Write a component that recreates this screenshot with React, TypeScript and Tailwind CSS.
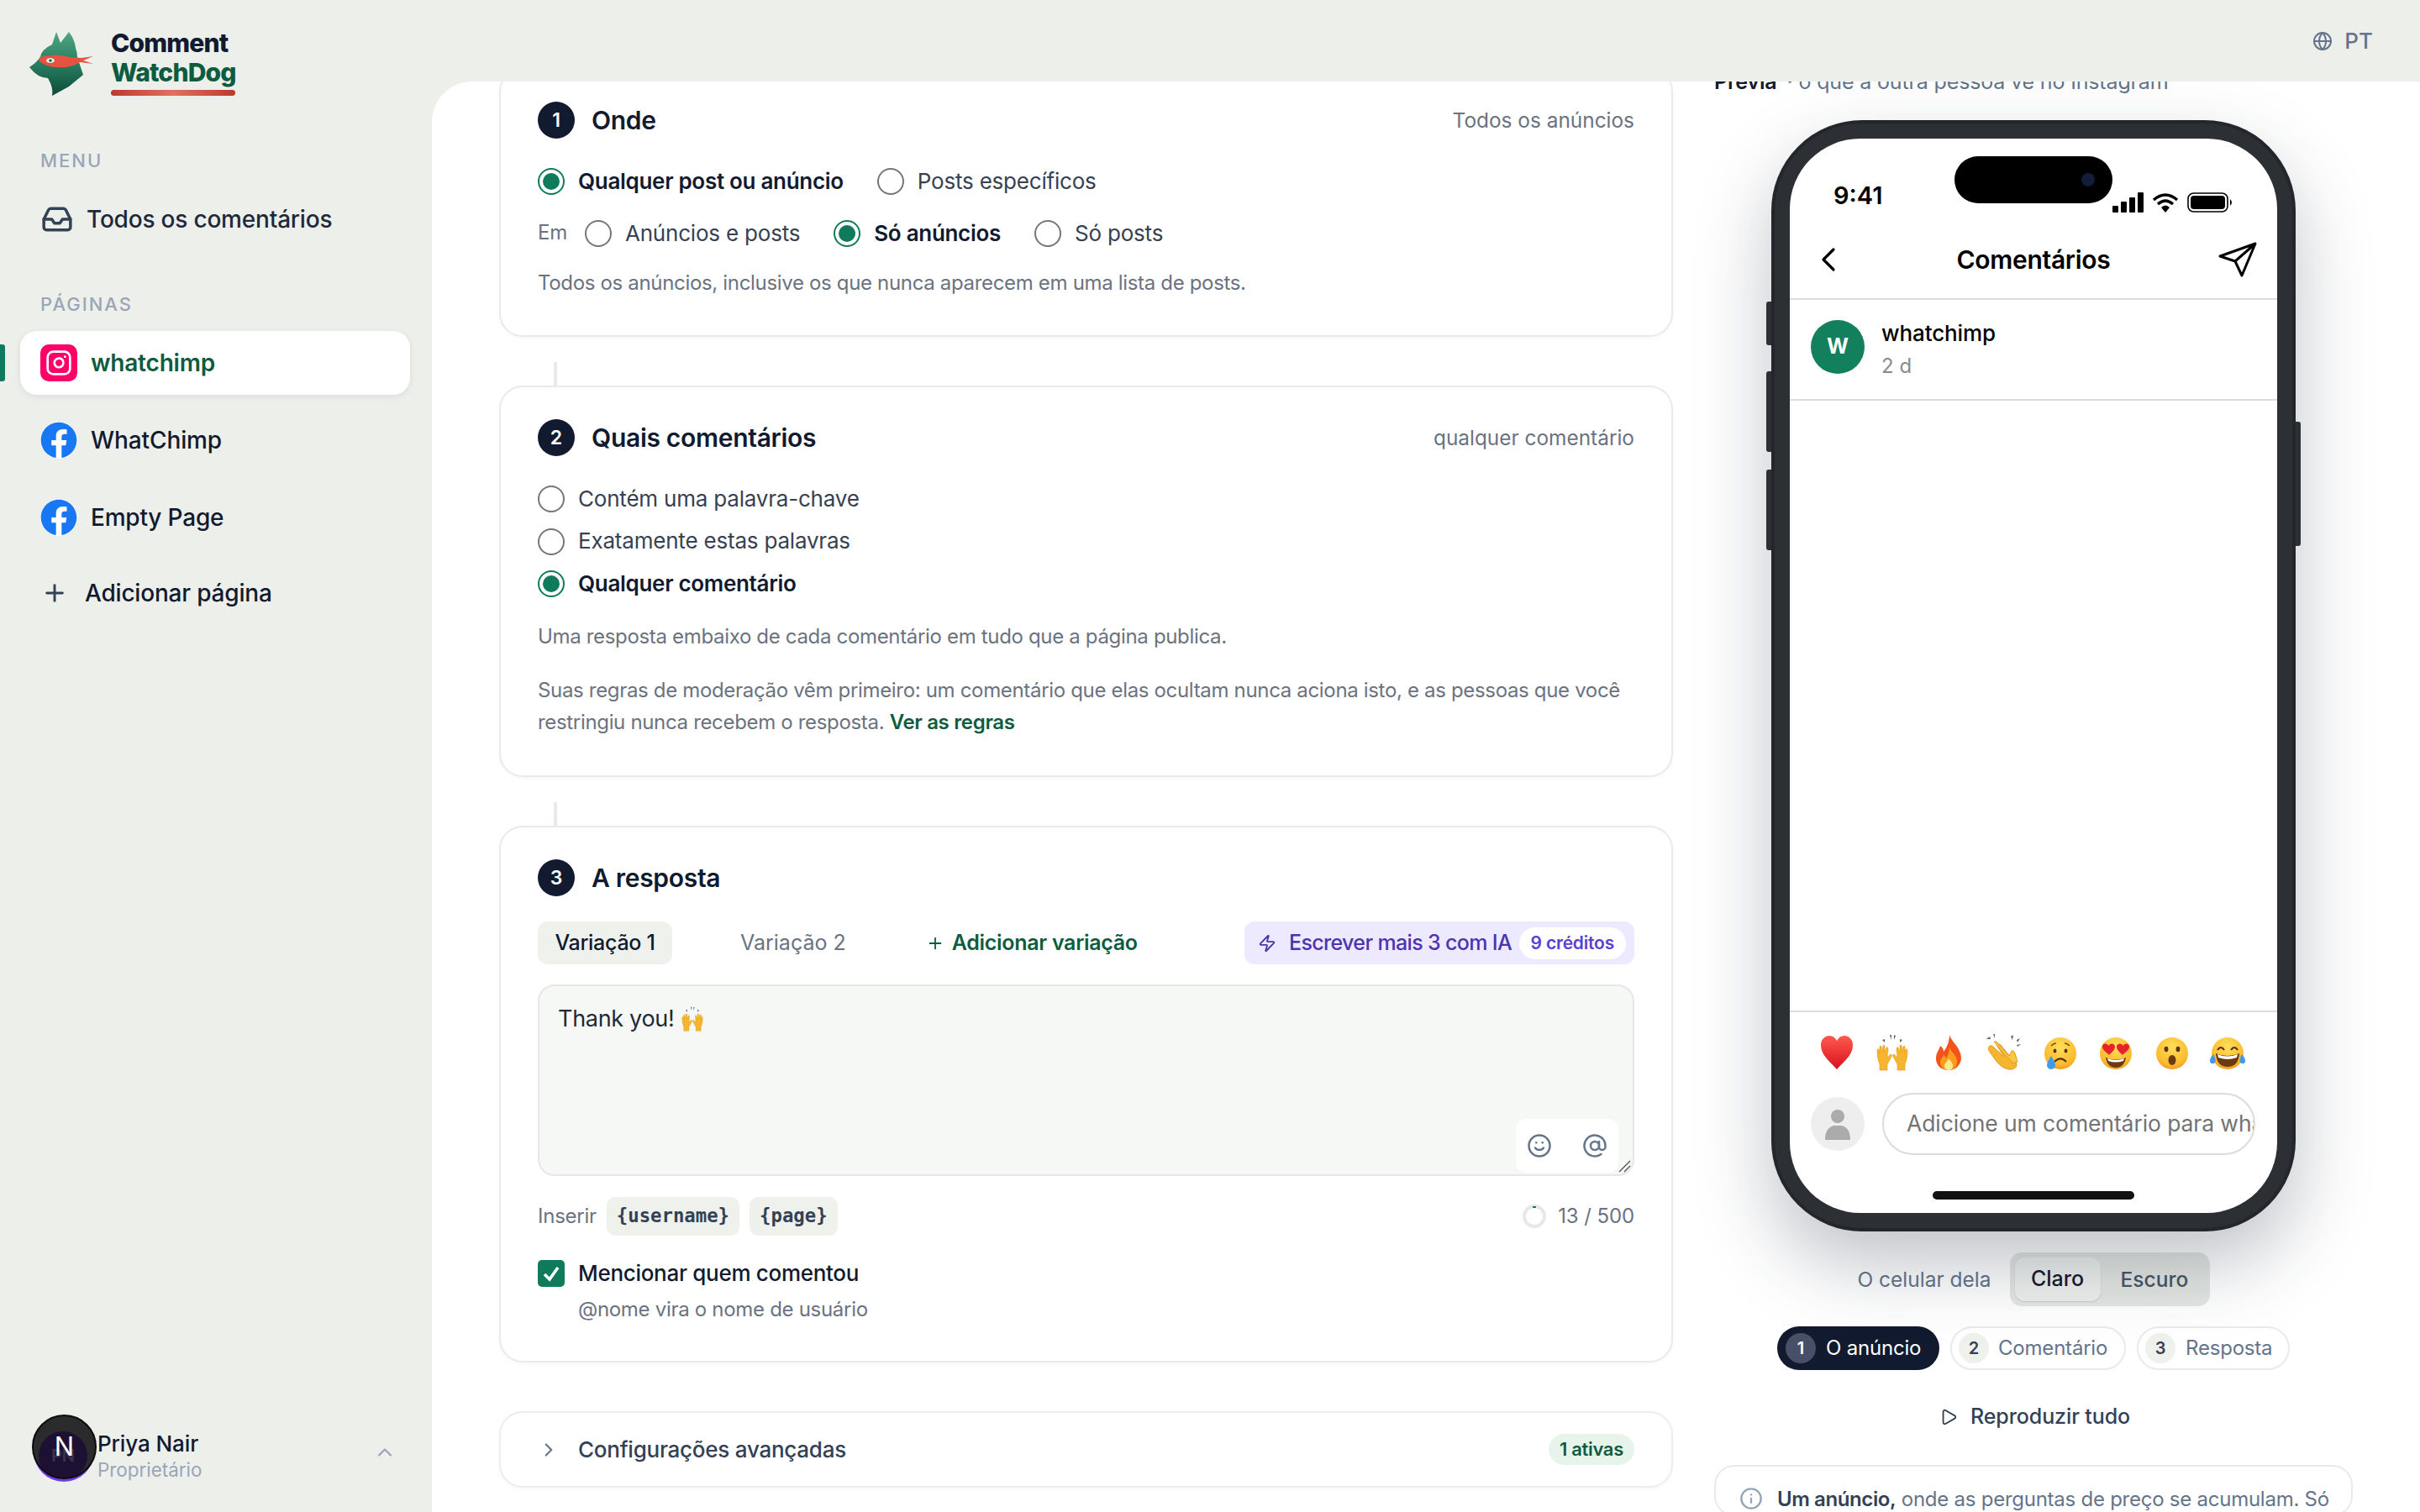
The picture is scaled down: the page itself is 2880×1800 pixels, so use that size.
import {
  AtSign,
  ChevronLeft,
  ChevronRight,
  ChevronUp,
  Globe,
  Inbox,
  Info,
  Instagram,
  Play,
  Plus,
  Smile,
  Zap,
} from "lucide-react";
import { ReactNode } from "react";
import { FaFacebook } from "react-icons/fa";

function Logo() {
  return (
    <svg width="82" height="84" viewBox="34 34 82 84" className="shrink-0">
      <defs>
        <linearGradient id="dog" x1="0" y1="0" x2="0" y2="1">
          <stop offset="0" stopColor="#4fa585" />
          <stop offset="0.55" stopColor="#26795c" />
          <stop offset="1" stopColor="#0d4a39" />
        </linearGradient>
      </defs>
      <path
        d="M36 79 Q44 74 49 67 Q50 58 63 52 L68 37 L73 50 L83 37 Q90 46 91 56 Q93 62 93 67 L100 88 L83 102 L63 113 Q65 104 58 92 Q46 92 36 79 Z"
        fill="url(#dog)"
      />
      <path d="M48 67 Q70 62 84 67 L98 68 L112 66 L100 71 L112 75 L96 73 Q86 80 72 79 Q58 80 48 72 Z" fill="#e5523f" />
      <ellipse cx="61" cy="71" rx="5" ry="3" fill="#d9f0e6" />
      <circle cx="61" cy="71" r="1.6" fill="#0d4a39" />
    </svg>
  );
}

function FacebookIcon() {
  return (
    <span className="flex h-[44px] w-[44px] shrink-0 items-center justify-center rounded-full bg-white">
      <FaFacebook className="h-[44px] w-[44px] text-[#1877f2]" />
    </span>
  );
}

function Radio({ checked = false }: { checked?: boolean }) {
  return checked ? (
    <span className="mt-[2px] flex h-[32px] w-[32px] shrink-0 items-center justify-center rounded-full border-2 border-[#0f7b5c]">
      <span className="h-[20px] w-[20px] rounded-full bg-[#0f7b5c]" />
    </span>
  ) : (
    <span className="mt-[2px] h-[32px] w-[32px] shrink-0 rounded-full border-2 border-[#767676]" />
  );
}

function RadioOption({ label, checked = false }: { label: string; checked?: boolean }) {
  return (
    <div className="flex h-[36px] items-center gap-[16px]">
      <Radio checked={checked} />
      <span className={checked ? "text-[26px] font-semibold tracking-[-0.3px] text-[#111a2e]" : "text-[26px] tracking-[-0.2px] text-[#374151]"}>{label}</span>
    </div>
  );
}

function Card({ children }: { children: ReactNode }) {
  return <section className="rounded-[28px] border-2 border-[#e9ebe8] bg-white px-[44px] pt-[38px] shadow-[0_2px_4px_rgba(0,0,0,0.03)]">{children}</section>;
}

function StepHeader({ n, title, right }: { n: number; title: string; right?: string }) {
  return (
    <div className="flex h-[44px] items-center">
      <span className="flex h-[44px] w-[44px] items-center justify-center rounded-full bg-[#111a2e] text-[23px] font-semibold text-white">{n}</span>
      <span className="ml-[20px] text-[30px] font-semibold tracking-[-0.3px] text-[#111a2e]">{title}</span>
      {right && <span className="ml-auto text-[24.4px] text-[#6b7280]">{right}</span>}
    </div>
  );
}

function Connector() {
  return <div className="ml-[65px] mt-[30px] h-[28px] w-[4px] bg-[#e9ebe8]" />;
}

function FaceGradient() {
  return (
    <radialGradient id="face" cx="0.5" cy="0.3" r="0.8">
      <stop offset="0" stopColor="#ffdf5a" />
      <stop offset="0.7" stopColor="#fbb92c" />
      <stop offset="1" stopColor="#e8871a" />
    </radialGradient>
  );
}

function RaisedHands({ size = 44 }: { size?: number }) {
  return (
    <svg width={size} height={size} viewBox="0 0 44 44">
      <g fill="#f5b52e" stroke="#e79a1f" strokeWidth="0.6">
        <path d="M4 21 Q4 17 6 18 L7 23 L7 15 Q8 13 9 15 L10 22 L11 14 Q12 12 13 14 L13 22 L15 16 Q17 15 17 18 L16 28 L20 24 Q22 24 21 27 L16 36 L16 43 L7 43 L7 36 Q4 30 4 21 Z" />
        <path d="M40 21 Q40 17 38 18 L37 23 L37 15 Q36 13 35 15 L34 22 L33 14 Q32 12 31 14 L31 22 L29 16 Q27 15 27 18 L28 28 L24 24 Q22 24 23 27 L28 36 L28 43 L37 43 L37 36 Q40 30 40 21 Z" />
      </g>
      <g fill="#5f6368">
        <path d="M10 7 L13 6 L13 10 Z" />
        <path d="M19 1 L21 1 L20.5 7 Z" />
        <path d="M24 1 L26 2 L24 7 Z" />
        <path d="M31 6 L34 7 L31 10 Z" />
      </g>
    </svg>
  );
}

function Emoji({ kind }: { kind: string }) {
  if (kind === "hands") return <RaisedHands />;
  if (kind === "heart") {
    return (
      <svg width="44" height="44" viewBox="0 0 44 44">
        <defs>
          <linearGradient id="heart" x1="0" y1="0" x2="0" y2="1">
            <stop offset="0" stopColor="#ff5a4d" />
            <stop offset="1" stopColor="#d9101c" />
          </linearGradient>
        </defs>
        <path d="M22 42 C13 32 3 25 3 13 C3 6 8 2 13 2 C17 2 20 4 22 8 C24 4 27 2 31 2 C36 2 41 6 41 13 C41 25 31 32 22 42 Z" fill="url(#heart)" />
      </svg>
    );
  }
  if (kind === "fire") {
    return (
      <svg width="44" height="44" viewBox="0 0 44 44">
        <path d="M23 1 C25 9 36 15 37 28 C37 37 30 43 22 43 C13 43 7 37 7 29 C7 22 11 19 12 14 C15 16 16 18 16 21 C20 16 23 9 23 1 Z" fill="#f2541b" />
        <path d="M23 16 C25 22 32 25 32 33 C32 39 27 43 22 43 C16 43 12 39 12 34 C12 30 15 28 16 25 C18 26 19 28 19 29 C21 26 23 21 23 16 Z" fill="#fb9d1c" />
        <path d="M22 29 C24 32 27 34 27 38 C27 41 25 43 22 43 C19 43 17 41 17 38 C17 34 21 33 22 29 Z" fill="#ffe98a" />
      </svg>
    );
  }
  if (kind === "clap") {
    return (
      <svg width="44" height="44" viewBox="0 0 44 44">
        <g fill="#f5b52e" stroke="#d98f1c" strokeWidth="0.8">
          <path d="M4 15 Q6 12 9 15 L22 27 L13 13 Q15 10 18 13 L30 28 L33 24 Q36 24 36 27 L37 38 Q34 43 27 42 Q20 41 14 34 L4 20 Q3 17 4 15 Z" />
          <path d="M10 9 Q13 8 15 11 L28 26 L31 20 Q34 19 35 23 L38 33 L33 35 L20 21 Z" fill="#fbc644" />
        </g>
        <g fill="#5f6368">
          <path d="M1 6 L5 3 L6 6 Z" />
          <path d="M9 0 L11 0 L11 5 Z" />
          <path d="M30 3 L33 1 L32 7 Z" />
          <path d="M37 7 L41 5 L38 10 Z" />
          <path d="M37 13 L42 12 L38 15 Z" />
        </g>
      </svg>
    );
  }
  return (
    <svg width="44" height="44" viewBox="0 0 44 44">
      <defs>
        <FaceGradient />
      </defs>
      <circle cx="22" cy="23" r="19" fill="url(#face)" />
      {kind === "sad" && (
        <g>
          <ellipse cx="15.5" cy="20" rx="2" ry="2.6" fill="#5b3410" />
          <ellipse cx="28.5" cy="20" rx="2" ry="2.6" fill="#5b3410" />
          <path d="M11 14 Q14 11 17 11 M33 14 Q30 11 27 11" stroke="#7a4a14" strokeWidth="1.3" fill="none" />
          <path d="M15 33 Q22 26 29 33" stroke="#5b3410" strokeWidth="2.2" fill="none" />
          <path d="M11 26 Q6 34 6 37 A5 5 0 0 0 16 37 Q16 34 11 26 Z" fill="#3d9be9" />
        </g>
      )}
      {kind === "love" && (
        <g>
          <path d="M14 25 C10 21 6 19 6 15 C6 11 11 10 13.5 14 C15 10 21 11 21 15 C21 19 17 22 14 25 Z" fill="#e8212d" />
          <path d="M30 25 C27 22 23 19 23 15 C23 11 29 10 30.5 14 C33 10 38 11 38 15 C38 19 34 21 30 25 Z" fill="#e8212d" />
          <path d="M10 28 Q22 33 34 28 Q32 40 22 40 Q12 40 10 28 Z" fill="#6b3a10" />
          <path d="M12 29 Q22 33 32 29 L31 32 Q22 35 13 32 Z" fill="#fff" />
        </g>
      )}
      {kind === "wow" && (
        <g>
          <ellipse cx="15" cy="18" rx="2.4" ry="3.2" fill="#5b3410" />
          <ellipse cx="29" cy="18" rx="2.4" ry="3.2" fill="#5b3410" />
          <ellipse cx="22" cy="31" rx="4.5" ry="6" fill="#6b3a10" />
        </g>
      )}
      {kind === "laugh" && (
        <g>
          <path d="M10 19 Q14 13 18 19 M26 19 Q30 13 34 19" stroke="#5b3410" strokeWidth="2.2" fill="none" />
          <path d="M8 23 Q22 29 36 23 Q35 39 22 39 Q9 39 8 23 Z" fill="#6b3a10" />
          <path d="M10 24 Q22 29 34 24 L33 28 Q22 32 11 28 Z" fill="#fff" />
          <path d="M5 24 Q0 30 1 33 Q3 37 7 34 Q9 31 5 24 Z M39 24 Q44 30 43 33 Q41 37 37 34 Q35 31 39 24 Z" fill="#3d9be9" />
        </g>
      )}
    </svg>
  );
}

function Phone() {
  const emojis = ["heart", "hands", "fire", "clap", "sad", "love", "wow", "laugh"];
  return (
    <div className="relative h-[1323px] w-[624px] rounded-[108px] border-[4px] border-[#23262b] bg-[#2c2f34] p-[18px] shadow-[0_40px_90px_rgba(30,41,59,0.28)]">
      <span className="absolute -left-[10px] top-[212px] h-[52px] w-[6px] rounded-l-[3px] bg-[#2c2f34]" />
      <span className="absolute -left-[10px] top-[295px] h-[96px] w-[6px] rounded-l-[3px] bg-[#2c2f34]" />
      <span className="absolute -left-[10px] top-[412px] h-[96px] w-[6px] rounded-l-[3px] bg-[#2c2f34]" />
      <span className="absolute -right-[10px] top-[355px] h-[148px] w-[6px] rounded-r-[3px] bg-[#2c2f34]" />
      <div className="relative flex h-full w-full flex-col overflow-hidden rounded-[84px] bg-white font-['Inter',sans-serif] text-black">
        <div className="absolute left-[196px] top-[21px] flex h-[56px] w-[188px] items-center justify-end rounded-full bg-black pr-[21px]">
          <span className="h-[16px] w-[16px] rounded-full bg-[#131c3a]" />
        </div>
        <div className="flex h-[100px] shrink-0 items-end justify-between pb-[12px] pl-[52px] pr-[52px]">
          <span className="mb-[2px] text-[29px] font-semibold leading-[36px]">9:41</span>
          <svg width="144" height="24" viewBox="0 0 144 24">
            <rect x="0" y="16" width="7" height="8" rx="1" />
            <rect x="10" y="11" width="7" height="13" rx="1" />
            <rect x="20" y="6" width="7" height="18" rx="1" />
            <rect x="30" y="0" width="7" height="24" rx="1" />
            <path d="M49 9 Q63 -3 77 9 M54 14 Q63 6 72 14" stroke="#000" strokeWidth="3.4" fill="none" />
            <path d="M58 18 Q63 13 68 18 L63 24 Z" />
            <rect x="90" y="1" width="47" height="22" rx="6.5" fill="none" stroke="#000" strokeWidth="1.6" />
            <rect x="93" y="4" width="41" height="16" rx="4" />
            <path d="M140 8 Q144 12 140 16 Z" />
          </svg>
        </div>
        <div className="relative flex h-[92px] shrink-0 items-center justify-center border-b-2 border-[#dcdcdc] pb-[2px]">
          <ChevronLeft className="absolute left-[22px] h-[48px] w-[48px]" strokeWidth={1.6} />
          <span className="text-[30px] font-semibold tracking-[-0.3px]">Comentários</span>
          <svg width="46" height="42" viewBox="0 0 46 42" className="absolute right-[24px]" fill="none" stroke="#000" strokeWidth="3" strokeLinejoin="round">
            <path d="M2 17 L44 2 L28 40 L20 23 Z M20 23 L44 2" />
          </svg>
        </div>
        <div className="flex h-[120px] shrink-0 border-b-2 border-[#dcdcdc] pl-[25px] pt-[24px]">
          <span className="flex h-[64px] w-[64px] items-center justify-center rounded-full bg-[#12805c] text-[25px] font-bold text-white">W</span>
          <div className="ml-[20px]">
            <div className="-mt-[1px] text-[26px] font-medium leading-[34px] tracking-[-0.1px]">whatchimp</div>
            <div className="mt-[6px] text-[24px] leading-[32px] text-[#8a8a8a]">2 d</div>
          </div>
        </div>
        <div className="flex-1" />
        <div className="shrink-0 border-t-2 border-[#dcdcdc] pl-[34px] pr-[37px] pt-[26px]">
          <div className="flex justify-between">
            {emojis.map((e) => (
              <Emoji key={e} kind={e} />
            ))}
          </div>
        </div>
        <div className="mt-[26px] flex shrink-0 items-center gap-[21px] pl-[25px] pr-[26px]">
          <span className="flex h-[64px] w-[64px] shrink-0 items-center justify-center rounded-full bg-[#eeeeee]">
            <svg width="32" height="38" viewBox="0 0 32 38" fill="#ababab">
              <circle cx="16" cy="10" r="8" />
              <path d="M1 38 Q1 24 11 21 L21 21 Q31 24 31 38 Z" />
            </svg>
          </span>
          <div className="flex h-[74px] min-w-0 flex-1 items-center overflow-hidden rounded-full border-2 border-[#dcdcdc] pl-[27px]">
            <span className="whitespace-nowrap text-[26.5px] tracking-[-0.1px] text-[#737373]">Adicione um comentário para whatchimp</span>
          </div>
        </div>
        <div className="mx-auto mb-[16px] mt-[43px] h-[10px] w-[240px] shrink-0 rounded-full bg-[#111111]" />
      </div>
    </div>
  );
}

export default function App() {
  return (
    <div className="flex h-screen w-full overflow-hidden bg-[#edefeb] font-['Inter',sans-serif] text-[#111a2e]">
      <aside className="relative flex w-[514px] shrink-0 flex-col">
        <div className="flex h-[97px] items-start pl-[33px] pt-[35px]">
          <Logo />
          <div className="ml-[17px] -mt-[1px] flex flex-col">
            <span className="text-[30px] font-extrabold leading-[35px] tracking-[-0.8px]">Comment</span>
            <span className="text-[30px] font-extrabold leading-[35px] tracking-[-0.8px] text-[#0e5c40]">WatchDog</span>
            <span className="mt-[3px] h-[7px] w-[148px] rounded-full bg-gradient-to-r from-[#b93a2b] via-[#e2705f] to-[#b93a2b]" />
          </div>
        </div>

        <div className="mt-[80px] pl-[48px] text-[22px] font-medium leading-[28px] tracking-[2px] text-[#9aa5b8]">MENU</div>
        <div className="mt-[34px] flex h-[44px] items-center pl-[49px]">
          <Inbox className="h-[38px] w-[38px] text-[#334155]" strokeWidth={2.2} />
          <span className="ml-[16px] text-[28px] font-medium tracking-[-0.2px] text-[#1e293b]">Todos os comentários</span>
        </div>

        <div className="mt-[65px] pl-[48px] text-[22px] font-medium leading-[28px] tracking-[2px] text-[#9aa5b8]">PÁGINAS</div>

        <div className="relative mx-[24px] mt-[18px] flex h-[76px] w-[464px] items-center rounded-[20px] bg-white pl-[24px] shadow-[0_2px_8px_rgba(15,23,42,0.08)]">
          <span className="absolute -left-[24px] top-[16px] h-[44px] w-[6px] rounded-r-[3px] bg-[#0f7b5c]" />
          <span className="flex h-[44px] w-[44px] items-center justify-center rounded-[10px] bg-[#ff0069]">
            <Instagram className="h-[32px] w-[32px] text-white" strokeWidth={2} />
          </span>
          <span className="ml-[16px] text-[28px] font-semibold tracking-[-0.2px] text-[#0e5c40]">whatchimp</span>
        </div>

        <div className="mt-[31px] flex h-[46px] items-center pl-[48px]">
          <FacebookIcon />
          <span className="ml-[16px] text-[28px] font-medium tracking-[-0.1px] text-[#111a2e]">WhatChimp</span>
        </div>
        <div className="mt-[46px] flex h-[46px] items-center pl-[48px]">
          <FacebookIcon />
          <span className="ml-[16px] text-[28px] font-medium tracking-[-0.2px] text-[#111a2e]">Empty Page</span>
        </div>
        <div className="mt-[44px] flex h-[46px] items-center pl-[49px]">
          <Plus className="h-[32px] w-[32px] text-[#334155]" strokeWidth={2.2} />
          <span className="ml-[20px] text-[28px] font-medium tracking-[-0.2px] text-[#111a2e]">Adicionar página</span>
        </div>

        <div className="absolute bottom-[35px] left-[38px] flex w-[434px] items-center">
          <div className="relative h-[77px] w-[77px] shrink-0">
            <span className="absolute left-[2px] top-[4px] h-[76px] w-[72px] rounded-full bg-[#6a3de8]" />
            <span className="absolute inset-0 overflow-hidden rounded-full border-2 border-[#0c0c0c] bg-[#2b2b2b]">
              <span className="absolute left-[6px] top-[18px] flex h-[58px] w-[58px] items-center justify-center rounded-full bg-[#1d1033] text-[20px] font-bold text-[#3a3048]">PN</span>
            </span>
            <span className="absolute inset-0 flex items-center justify-center text-[31px] font-normal text-white">N</span>
          </div>
          <div className="ml-[1px] mt-[24px] flex flex-col">
            <span className="text-[26px] font-medium leading-[32px] tracking-[-0.1px] text-[#111a2e]">Priya Nair</span>
            <span className="text-[22.4px] leading-[30px] text-[#9aa5b8]">Proprietário</span>
          </div>
          <ChevronUp className="ml-auto mt-[14px] h-[28px] w-[28px] text-[#9aa5b8]" />
        </div>
      </aside>

      <div className="flex min-w-0 flex-1 flex-col">
        <div className="flex h-[97px] shrink-0 items-center justify-end pr-[56px]">
          <Globe className="h-[24px] w-[24px] text-[#64748b]" />
          <span className="ml-[14px] text-[26px] font-medium text-[#64748b]">PT</span>
        </div>

        <main className="flex min-h-0 flex-1 gap-[49px] overflow-hidden rounded-tl-[48px] bg-white pl-[80px] pr-[80px]">
          <div className="-mt-[16px] w-[1397px] shrink-0">
            <Card>
              <StepHeader n={1} title="Onde" right="Todos os anúncios" />
              <div className="mt-[32px] flex gap-[40px]">
                <RadioOption label="Qualquer post ou anúncio" checked />
                <RadioOption label="Posts específicos" />
              </div>
              <div className="mt-[26px] flex items-center">
                <span className="mr-[21px] text-[24px] leading-none tracking-[-0.25px] text-[#6b7280]">Em</span>
                <RadioOption label="Anúncios e posts" />
                <span className="w-[40px]" />
                <RadioOption label="Só anúncios" checked />
                <span className="w-[40px]" />
                <RadioOption label="Só posts" />
              </div>
              <p className="mt-[23px] pb-[43px] text-[24px] leading-[38px] tracking-[-0.33px] text-[#6b7280]">Todos os anúncios, inclusive os que nunca aparecem em uma lista de posts.</p>
            </Card>
            <Connector />
            <Card>
              <StepHeader n={2} title="Quais comentários" right="qualquer comentário" />
              <div className="mt-[32px] flex flex-col gap-[14.5px]">
                <RadioOption label="Contém uma palavra-chave" />
                <RadioOption label="Exatamente estas palavras" />
                <RadioOption label="Qualquer comentário" checked />
              </div>
              <p className="mt-[27px] text-[24px] leading-[38px] tracking-[-0.33px] text-[#6b7280]">Uma resposta embaixo de cada comentário em tudo que a página publica.</p>
              <p className="mt-[26px] pb-[44px] text-[24px] leading-[38px] tracking-[-0.33px] text-[#6b7280]">
                Suas regras de moderação vêm primeiro: um comentário que elas ocultam nunca aciona isto, e as pessoas que você restringiu nunca recebem o resposta.{" "}
                <span className="font-semibold text-[#0e5c40]">Ver as regras</span>
              </p>
            </Card>
            <Connector />
            <Card>
              <StepHeader n={3} title="A resposta" />
              <div className="mt-[30px] flex h-[51px] items-center text-[25px] tracking-[-0.3px]">
                <span className="flex h-[51px] w-[160px] items-center justify-center rounded-[12px] bg-[#eff1ed] font-medium text-[#111a2e]">Variação 1</span>
                <span className="ml-[81px] tracking-normal text-[#6b7280]">Variação 2</span>
                <Plus className="ml-[95px] h-[22px] w-[22px] text-[#0e5c40]" />
                <span className="ml-[9px] font-semibold text-[#0e5c40]">Adicionar variação</span>
                <div className="ml-auto flex h-[51px] w-[464px] items-center rounded-[12px] bg-[#ede9fe] pl-[16px] pr-[10px]">
                  <Zap className="h-[22px] w-[22px] shrink-0 text-[#4c34b0]" />
                  <span className="ml-[15px] whitespace-nowrap text-[25px] font-medium tracking-[-0.65px] text-[#4c34b0]">Escrever mais 3 com IA</span>
                  <span className="ml-auto flex h-[38px] items-center whitespace-nowrap rounded-full bg-white px-[14px] text-[21px] font-semibold tracking-[-0.2px] text-[#5b3fd0]">9 créditos</span>
                </div>
              </div>
              <div className="relative mt-[24px] h-[228px] rounded-[20px] border-2 border-[#e6e8e4] bg-[#f6f8f5] pl-[22px] pt-[20px]">
                <div className="flex items-center text-[27px] leading-[38px] tracking-[-0.3px] text-[#1f2937]">
                  Thank you!
                  <span className="ml-[6px]">
                    <RaisedHands size={30} />
                  </span>
                </div>
                <div className="absolute bottom-[2px] right-[17px] flex h-[64px] w-[122px] items-center justify-between rounded-[12px] bg-white px-[13px]">
                  <Smile className="h-[30px] w-[30px] text-[#64748b]" />
                  <AtSign className="h-[30px] w-[30px] text-[#64748b]" />
                </div>
                <svg width="16" height="16" viewBox="0 0 16 16" className="absolute bottom-[2px] right-[2px]" stroke="#555" strokeWidth="1.4">
                  <path d="M15 2 L2 15 M15 8 L8 15" />
                </svg>
              </div>
              <div className="mt-[25px] flex h-[46px] items-center">
                <span className="mr-[12px] text-[24px] tracking-[-0.25px] text-[#6b7280]">Inserir</span>
                <span className="flex h-[46px] items-center rounded-[10px] bg-[#eff1ed] px-[12px] font-['DejaVu_Sans_Mono',monospace] text-[22.3px] font-bold text-[#334155]">{"{username}"}</span>
                <span className="ml-[12px] flex h-[46px] items-center rounded-[10px] bg-[#eff1ed] px-[12px] font-['DejaVu_Sans_Mono',monospace] text-[22.3px] font-bold text-[#334155]">{"{page}"}</span>
                <svg width="30" height="30" viewBox="0 0 30 30" className="ml-auto" fill="none" strokeWidth="4">
                  <circle cx="15" cy="15" r="12" stroke="#e7e9e5" />
                  <path d="M15 3 L15 5" stroke="#0f7b5c" />
                </svg>
                <span className="ml-[13px] text-[24px] tracking-[-0.1px] text-[#6b7280]">13 / 500</span>
              </div>
              <div className="mt-[26px] flex h-[36px] items-center gap-[16px]">
                <span className="mt-[2px] flex h-[32px] w-[32px] items-center justify-center rounded-[5px] bg-[#0f7b5c]">
                  <svg width="24" height="24" viewBox="0 0 24 24" fill="none" stroke="#fff" strokeWidth="3.6">
                    <path d="M4 13 L10 19 L20 5" />
                  </svg>
                </span>
                <span className="text-[26px] font-medium tracking-[-0.3px] text-[#111a2e]">Mencionar quem comentou</span>
              </div>
              <p className="mt-[7px] pb-[42px] pl-[48px] text-[24px] leading-[38px] tracking-[-0.3px] text-[#6b7280]">@nome vira o nome de usuário</p>
            </Card>
            <section className="mt-[58px] flex h-[91px] items-center rounded-[28px] border-2 border-[#eceeeb] bg-white pl-[44px] pr-[44px] shadow-[0_2px_4px_rgba(0,0,0,0.03)]">
              <ChevronRight className="h-[26px] w-[26px] text-[#64748b]" />
              <span className="ml-[22px] text-[26px] font-medium tracking-[-0.25px] text-[#334155]">Configurações avançadas</span>
              <span className="ml-auto flex h-[37px] items-center rounded-full bg-[#e6f4ec] px-[13px] text-[22px] font-semibold tracking-[-0.3px] text-[#0e5c40]">1 ativas</span>
            </section>
          </div>

          <div className="-mt-[19px] flex w-[760px] shrink-0 flex-col items-center">
            <div className="h-[38px] w-full shrink-0 text-[25px] leading-[38px] tracking-[-0.15px] text-[#64748b]">
              <span className="font-semibold text-[#111a2e]">Prévia</span>
              <span className="ml-[12px]">· o que a outra pessoa vê no Instagram</span>
            </div>
            <div className="mt-[27px] shrink-0">
              <Phone />
            </div>
            <div className="mt-[25px] flex shrink-0 items-center">
              <span className="mr-[22px] text-[24.5px] text-[#64748b]">O celular dela</span>
              <div className="flex h-[64px] w-[238px] items-center rounded-[14px] bg-[#e4e7e3] p-[6px]">
                <span className="flex h-[52px] w-[102px] items-center justify-center rounded-[12px] bg-[#eff1ee] text-[25px] font-medium text-[#111a2e] shadow-[0_1px_2px_rgba(0,0,0,0.12)]">Claro</span>
                <span className="ml-[24px] text-[24.5px] font-medium text-[#475569]">Escuro</span>
              </div>
            </div>
            <div className="mt-[24px] flex h-[52px] shrink-0 gap-[13px] text-[24px] tracking-[-0.2px]">
              <div className="flex w-[193px] items-center rounded-full bg-[#111a2e] pl-[10px]">
                <span className="flex h-[36px] w-[36px] items-center justify-center rounded-full bg-[#475068] text-[20px] font-semibold text-white">1</span>
                <span className="ml-[12px] text-white">O anúncio</span>
              </div>
              <div className="flex w-[209px] items-center rounded-full border-2 border-[#e9ebe8] bg-white pl-[8px]">
                <span className="flex h-[36px] w-[36px] items-center justify-center rounded-full bg-[#eff1ed] text-[20px] font-semibold text-[#374151]">2</span>
                <span className="ml-[11px] text-[#64748b]">Comentário</span>
              </div>
              <div className="flex w-[182px] items-center rounded-full border-2 border-[#e9ebe8] bg-white pl-[8px]">
                <span className="flex h-[36px] w-[36px] items-center justify-center rounded-full bg-[#eff1ed] text-[20px] font-semibold text-[#374151]">3</span>
                <span className="ml-[12px] text-[#64748b]">Resposta</span>
              </div>
            </div>
            <div className="mt-[37px] flex h-[38px] shrink-0 items-center pl-[3px]">
              <Play className="h-[22px] w-[22px] text-[#334155]" />
              <span className="ml-[15px] text-[25px] font-medium tracking-[-0.1px] text-[#334155]">Reproduzir tudo</span>
            </div>
            <div className="mt-[38px] flex w-full shrink-0 rounded-[24px] border-2 border-[#e9ebe8] bg-white px-[28px] pt-[21px]">
              <Info className="mt-[3px] h-[28px] w-[28px] shrink-0 text-[#94a3b8]" />
              <p className="ml-[17px] whitespace-nowrap text-[24px] leading-[36px] tracking-[-0.25px] text-[#64748b]">
                <span className="font-semibold tracking-[-0.4px] text-[#334155]">Um anúncio,</span> onde as perguntas de preço se acumulam. Só
              </p>
            </div>
          </div>
        </main>
      </div>
    </div>
  );
}
